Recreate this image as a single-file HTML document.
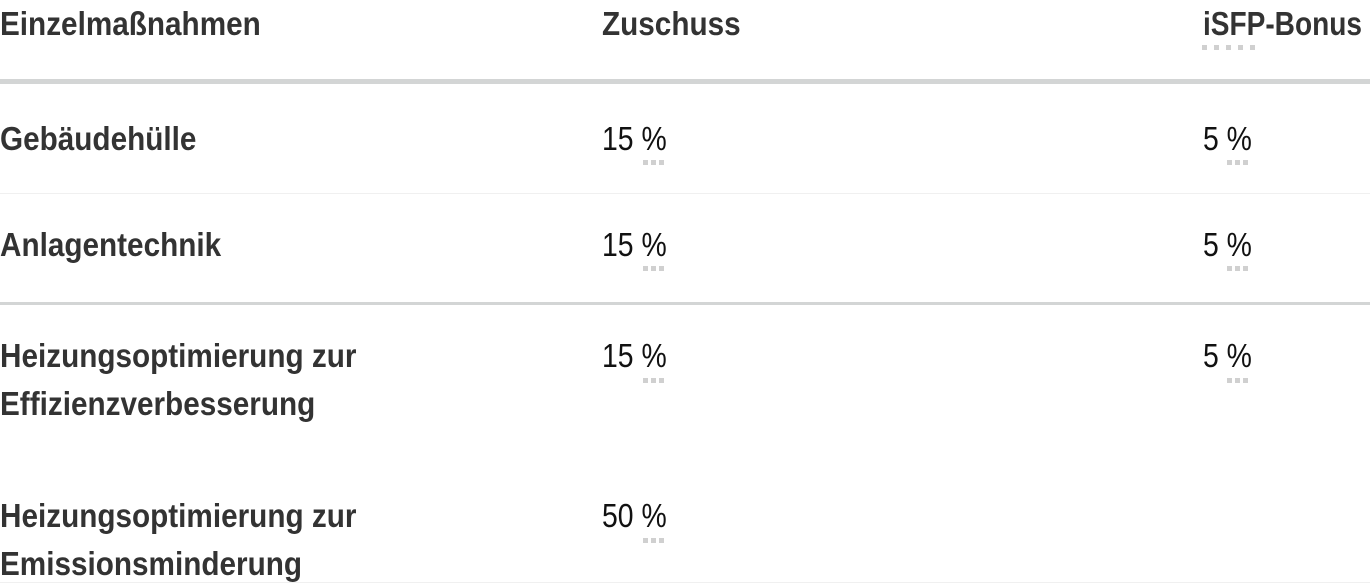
<!DOCTYPE html>
<html><head><meta charset="utf-8"><style>
body{margin:0;width:1370px;height:584px;background:#fff;position:relative;overflow:hidden;font-family:"Liberation Sans",sans-serif}
.t{position:absolute;line-height:48px;font-size:33px;white-space:nowrap;transform:scaleX(0.9);transform-origin:0 0}
.b{font-weight:bold;color:#333}
.v{color:#111;transform:scaleX(0.86)}
.h{position:absolute;left:0;width:1370px}
.d{position:absolute;height:5px;background:repeating-linear-gradient(90deg,#d0d0d0 0 5px,transparent 5px 8px)}
.d2{position:absolute;height:5px;background:repeating-linear-gradient(90deg,#d0d0d0 0 5px,transparent 5px 12px)}
</style></head><body>
<div class="t b" style="left:0;top:0px">Einzelmaßnahmen</div>
<div class="t b" style="left:602px;top:0px">Zuschuss</div>
<div class="t b" style="left:1203px;top:0px;transform:scaleX(0.85)">iSFP-Bonus</div>
<div class="d2" style="left:1202px;top:45px;width:60px"></div>
<div class="h" style="top:79px;height:5px;background:#d3d5d5"></div>

<div class="t b" style="left:0;top:115px">Gebäudehülle</div>
<div class="t v" style="left:602px;top:115px">15 %</div>
<div class="d" style="left:643px;top:160px;width:24px"></div>
<div class="t v" style="left:1203px;top:115px">5 %</div>
<div class="d" style="left:1227px;top:160px;width:24px"></div>
<div class="h" style="top:193px;height:1px;background:#f0f0f0"></div>

<div class="t b" style="left:0;top:221px">Anlagentechnik</div>
<div class="t v" style="left:602px;top:221px">15 %</div>
<div class="d" style="left:643px;top:266px;width:24px"></div>
<div class="t v" style="left:1203px;top:221px">5 %</div>
<div class="d" style="left:1227px;top:266px;width:24px"></div>
<div class="h" style="top:302px;height:3px;background:#d3d5d5"></div>

<div class="t b" style="left:0;top:332px">Heizungsoptimierung zur<br>Effizienzverbesserung</div>
<div class="t v" style="left:602px;top:332px">15 %</div>
<div class="d" style="left:643px;top:378px;width:24px"></div>
<div class="t v" style="left:1203px;top:332px">5 %</div>
<div class="d" style="left:1227px;top:378px;width:24px"></div>

<div class="t b" style="left:0;top:492px">Heizungsoptimierung zur<br>Emissionsminderung</div>
<div class="t v" style="left:602px;top:492px">50 %</div>
<div class="d" style="left:643px;top:538px;width:24px"></div>
<div class="h" style="top:582px;height:1px;background:#f0f0f0"></div>
</body></html>
